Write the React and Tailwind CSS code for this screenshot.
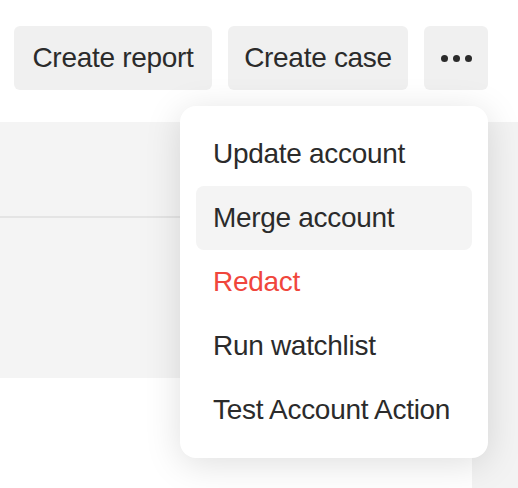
import { useState } from "react";

const actions = [
  { label: "Update account" },
  { label: "Merge account", active: true },
  { label: "Redact", danger: true },
  { label: "Run watchlist" },
  { label: "Test Account Action" },
];

function HeaderButton({ children, className = "" }) {
  return (
    <button
      type="button"
      className={`h-16 whitespace-nowrap rounded-md bg-[#f0f0f0] text-[28px] leading-none tracking-[-0.3px] text-[#2b2b2b] ${className}`}
    >
      {children}
    </button>
  );
}

function App() {
  const [open] = useState(true);

  return (
    <div
      className="relative h-[488px] w-[518px] overflow-hidden bg-white"
      style={{ fontFamily: '"Liberation Sans", Arial, sans-serif' }}
    >
      <header className="flex h-[122px] items-start justify-end gap-4 pr-[30px] pt-[26px]">
        <HeaderButton className="w-[198px]">Create report</HeaderButton>
        <HeaderButton className="w-[180px]">Create case</HeaderButton>
        <HeaderButton className="flex w-16 items-center justify-center gap-[5px]">
          <span className="h-[7px] w-[7px] rounded-full bg-[#2b2b2b]" />
          <span className="h-[7px] w-[7px] rounded-full bg-[#2b2b2b]" />
          <span className="h-[7px] w-[7px] rounded-full bg-[#2b2b2b]" />
        </HeaderButton>
      </header>

      <div className="flex h-[366px]">
        <main className="flex-1">
          <section className="bg-[#f4f4f4]">
            <div className="h-[94px]" />
            <div className="h-[2px] bg-[#e4e4e4]" />
            <div className="h-[160px]" />
          </section>
        </main>
        <aside className="w-[46px] bg-[#f3f3f3]" />
      </div>

      {open && (
        <div className="absolute right-[30px] top-[106px] w-[308px] rounded-2xl bg-white px-4 py-4 shadow-[0_6px_36px_rgba(0,0,0,0.13)]">
          {actions.map((a) => (
            <div
              key={a.label}
              className={`flex h-16 items-center whitespace-nowrap rounded-lg px-[17px] text-[28px] leading-none tracking-[-0.3px] ${
                a.active ? "bg-[#f4f4f4]" : ""
              } ${a.danger ? "text-[#f0463c]" : "text-[#2b2b2b]"}`}
            >
              {a.label}
            </div>
          ))}
        </div>
      )}
    </div>
  );
}

export default App;
